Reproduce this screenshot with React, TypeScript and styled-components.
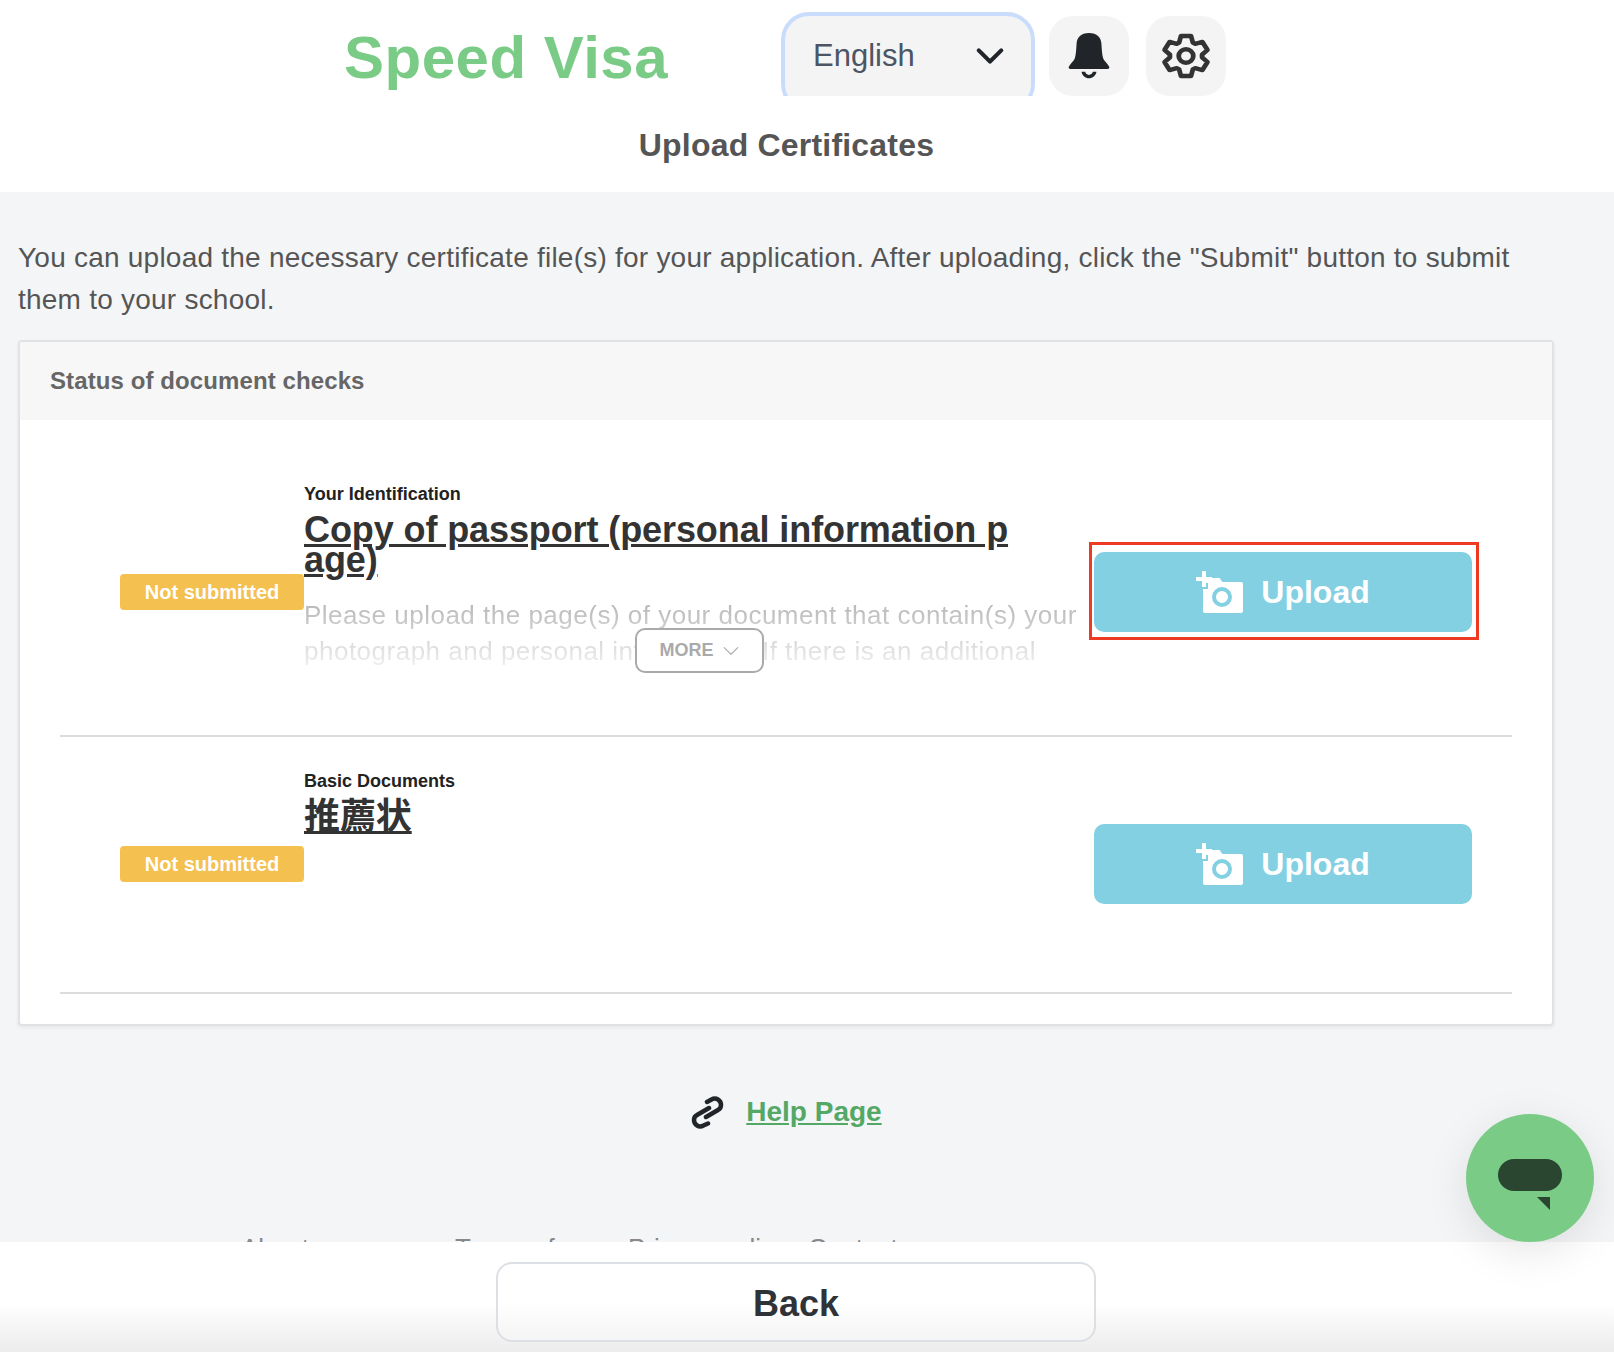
import React from "react";
import styled, { createGlobalStyle } from "styled-components";
import { BsChevronDown } from "react-icons/bs";

import type { FC } from "react";

const FONT = `"Liberation Sans", "Noto Sans CJK JP", sans-serif`;

const GlobalStyle = createGlobalStyle`
  html, body {
    margin: 0;
    padding: 0;
    height: 1352px;
    overflow: hidden;
    background: #f4f5f7;
    font-family: ${FONT};
  }
  * { box-sizing: border-box; }
`;

const Header = styled.header`
  height: 192px;
  background: #fff;
`;

const TopBar = styled.div`
  display: flex;
  height: 96px;
  padding-left: 344px;
  overflow: hidden;
`;

const Logo = styled.div`
  width: 437px;
  padding-top: 22px;
  font-size: 60px;
  line-height: 72px;
  font-weight: 700;
  letter-spacing: 0.5px;
  color: #7acb86;
`;

const LangSelect = styled.div`
  display: flex;
  align-items: center;
  justify-content: space-between;
  flex-shrink: 0;
  width: 254px;
  height: 100px;
  margin-top: 12px;
  margin-right: 14px;
  padding: 0 26px 12px 28px;
  border: 4px solid #c9dcfb;
  border-radius: 28px;
  background: #f4f4f4;
  font-size: 31px;
  color: #4b5563;
`;

const IconBox = styled.div<{ $gap?: number }>`
  display: flex;
  align-items: center;
  justify-content: center;
  width: 80px;
  height: 80px;
  margin-top: 16px;
  margin-right: ${(p) => p.$gap ?? 0}px;
  border-radius: 24px;
  background: #f4f4f4;
`;

const PageTitle = styled.h1`
  margin: 0;
  width: 1573px;
  padding-top: 31px;
  font-size: 32px;
  line-height: 36px;
  font-weight: 700;
  letter-spacing: 0.2px;
  color: #555;
  text-align: center;
`;

const Main = styled.main`
  padding: 45px 60px 0 18px;
`;

const Intro = styled.p`
  margin: 0 0 19px;
  font-size: 28px;
  line-height: 42px;
  letter-spacing: 0.23px;
  color: #555;
`;

const Card = styled.section`
  border: 2px solid #e0e2e5;
  border-radius: 4px;
  background: #fff;
  box-shadow: 0 2px 4px rgba(0, 0, 0, 0.06);
  padding-bottom: 30px;
`;

const CardHead = styled.div`
  height: 78px;
  padding-left: 30px;
  background: #f7f7f8;
  font-size: 24px;
  line-height: 78px;
  font-weight: 700;
  letter-spacing: 0.1px;
  color: #666;
`;

const Row = styled.div<{ $pad: number; $height: number }>`
  display: flex;
  align-items: center;
  min-height: ${(p) => p.$height}px;
  margin: 0 40px;
  padding: ${(p) => p.$pad}px 40px 35px 60px;
  border-bottom: 2px solid #dcdcdc;
`;

const Badge = styled.div`
  flex: 0 0 184px;
  height: 36px;
  border-radius: 4px;
  background: #f4c050;
  color: #fff;
  font-size: 20px;
  line-height: 36px;
  font-weight: 700;
  text-align: center;
`;

const Body = styled.div`
  flex: 0 0 772px;
  align-self: stretch;
`;

const Category = styled.div`
  font-size: 18px;
  line-height: 20px;
  font-weight: 700;
  color: #222;
`;

const DocTitle = styled.a`
  display: block;
  margin-top: 11px;
  width: 720px;
  font-size: 36px;
  line-height: 30px;
  font-weight: 700;
  letter-spacing: -0.1px;
  color: #333;
  text-decoration: underline;
  word-break: break-all;
`;

const DescWrap = styled.div`
  position: relative;
  margin-top: 22px;
  height: 76px;
`;

const Desc = styled.p`
  margin: 0;
  font-size: 26px;
  line-height: 36px;
  letter-spacing: 0.5px;
  color: #555;
  white-space: nowrap;
  -webkit-mask-image: linear-gradient(to bottom, rgba(0, 0, 0, 0.45), rgba(0, 0, 0, 0.08));
  mask-image: linear-gradient(to bottom, rgba(0, 0, 0, 0.45), rgba(0, 0, 0, 0.08));
`;

const MoreButton = styled.button`
  position: absolute;
  left: 331px;
  top: 31px;
  display: flex;
  align-items: center;
  justify-content: center;
  gap: 8px;
  width: 129px;
  height: 45px;
  border: 2px solid #aaa;
  border-radius: 10px;
  background: #fff;
  color: #aaa;
  font: 700 18px ${FONT};
`;

const UploadWrap = styled.div`
  position: relative;
  margin-left: auto;
`;

const UploadButton = styled.button`
  display: flex;
  align-items: center;
  justify-content: center;
  gap: 18px;
  width: 378px;
  height: 80px;
  border: 0;
  border-radius: 10px;
  background: #83d0e3;
  color: #fff;
  font: 700 32px ${FONT};
`;

const RedFrame = styled.div`
  position: absolute;
  left: -5px;
  top: -10px;
  width: 390px;
  height: 98px;
  border: 3.5px solid #ee3a22;
  pointer-events: none;
`;

const HelpRow = styled.div`
  display: flex;
  align-items: center;
  justify-content: center;
  gap: 22px;
  width: 1573px;
  margin-top: 68px;
`;

const HelpLink = styled.a`
  font-size: 28px;
  line-height: 36px;
  font-weight: 700;
  color: #53a866;
  text-decoration: underline;
`;

const FooterLinks = styled.nav`
  display: flex;
  margin: 102px 0 0 241px;
  font-size: 26px;
  line-height: 32px;
  color: #888;

  a:nth-child(1) { width: 214px; }
  a:nth-child(2) { width: 173px; }
  a:nth-child(3) { width: 180px; }
`;

const BottomBar = styled.div`
  position: fixed;
  left: 0;
  right: 0;
  bottom: 0;
  height: 110px;
  padding-top: 20px;
  background: linear-gradient(to bottom, #fff 55%, #ececec 100%);
`;

const BackButton = styled.button`
  display: block;
  width: 600px;
  height: 80px;
  margin-left: 496px;
  padding-top: 4px;
  border: 2px solid #dcdfe3;
  border-radius: 16px;
  background: linear-gradient(to bottom, #fff 50%, #f4f4f5 100%);
  color: #2f3338;
  font: 700 36px ${FONT};
`;

const ChatBubble = styled.div`
  position: fixed;
  left: 1466px;
  top: 1114px;
  width: 128px;
  height: 128px;
  border-radius: 50%;
  background: #7acb86;
  box-shadow: 0 10px 44px rgba(0, 0, 0, 0.1);
`;

const ChatPill = styled.div`
  position: absolute;
  left: 32px;
  top: 45px;
  width: 64px;
  height: 32px;
  border-radius: 16px;
  background: #2a4530;
`;

const ChatTail = styled.div`
  position: absolute;
  left: 71px;
  top: 83px;
  width: 13px;
  height: 13px;
  background: #2a4530;
  clip-path: polygon(0 0, 100% 0, 100% 100%);
`;

const BellIcon = () => (
  <svg width="42" height="46" viewBox="0 0 42 48" fill="#212529" preserveAspectRatio="none">
    <path d="M21 0C13 0 9 4.500 8.600 11c-.4 6-.6 11.500-1.800 15.500C5.800 29.500 2 32 .8 35.200c-.5 1.300.2 2.300 1.700 2.300h37c1.500 0 2.200-1 1.700-2.300C40 32 36.200 29.500 35.200 26.500 34 22.500 33.800 17 33.400 11 33 4.500 29 0 21 0z" />
    <path d="M13.500 40.500h3.600c.6 2 2 3.200 3.900 3.200s3.300-1.200 3.900-3.200h3.600c-.8 4-3.800 6.800-7.500 6.800s-6.700-2.800-7.500-6.800z" />
  </svg>
);

// six chunky teeth, walked round from the top one
const gearPoints = [-90, -30, 30, 90, 150, 210]
  .flatMap((a) =>
    [
      [a - 25, 15.5],
      [a - 13, 21.5],
      [a + 13, 21.5],
      [a + 25, 15.5],
    ].map(([deg, r]) => {
      const rad = (deg * Math.PI) / 180;
      return `${(r * Math.cos(rad)).toFixed(2)},${(r * Math.sin(rad)).toFixed(2)}`;
    })
  )
  .join(" ");

const GearIcon = () => (
  <svg width="50" height="46" viewBox="-24 -24 48 48" preserveAspectRatio="none">
    <polygon points={gearPoints} fill="none" stroke="#333" strokeWidth="4.600" strokeLinejoin="round" />
    <circle r="7" fill="none" stroke="#333" strokeWidth="4.600" />
  </svg>
);

const LinkIcon = () => (
  <svg width="33" height="33" viewBox="0 0 33 33" fill="none" stroke="#212529" strokeWidth="4.500" strokeLinecap="round">
    <path d="M16 6l4.500-2.500C25 1 30 4 30 9c0 2-1 4-3 5L15 21" />
    <path d="M17 27.500l-4.500 2C8 32 3 29 3 24c0-2 1-4 3-5l12-7" />
  </svg>
);

const CameraIcon = () => (
  <svg width="47" height="42" viewBox="0 0 47 42">
    <path
      fill="#fff"
      d="M10 7h13.500l3 4H45a2 2 0 0 1 2 2v27a2 2 0 0 1-2 2H9a2 2 0 0 1-2-2V18h5v-6H7v-1z"
    />
    <path fill="#fff" d="M6 0h4v6h6v4h-6v6H6v-6H0V6h6z" />
    <circle cx="26" cy="26" r="8" fill="#fff" stroke="#83d0e3" strokeWidth="4" />
  </svg>
);

interface IDocRow {
  category: string;
  title: string;
  pad: number;
  height: number;
  highlighted?: boolean;
  children?: React.ReactNode;
}

const DocRow: FC<IDocRow> = ({ category, title, pad, height, highlighted, children }) => (
  <Row $pad={pad} $height={height}>
    <Badge>Not submitted</Badge>
    <Body>
      <Category>{category}</Category>
      <DocTitle>{title}</DocTitle>
      {children}
    </Body>
    <UploadWrap>
      <UploadButton>
        <CameraIcon />
        Upload
      </UploadButton>
      {highlighted && <RedFrame />}
    </UploadWrap>
  </Row>
);

const App: FC = () => {
  return (
    <>
      <GlobalStyle />
      <Header>
        <TopBar>
          <Logo>Speed Visa</Logo>
          <LangSelect>
            English
            <BsChevronDown size={30} color="#212529" strokeWidth={1.2} />
          </LangSelect>
          <IconBox $gap={17}>
            <BellIcon />
          </IconBox>
          <IconBox>
            <GearIcon />
          </IconBox>
        </TopBar>
        <PageTitle>Upload Certificates</PageTitle>
      </Header>

      <Main>
        <Intro>
          You can upload the necessary certificate file(s) for your application. After uploading,
          click the "Submit" button to submit them to your school.
        </Intro>
        <Card>
          <CardHead>Status of document checks</CardHead>
          <DocRow
            category="Your Identification"
            title="Copy of passport (personal information page)"
            pad={64}
            height={317}
            highlighted
          >
            <DescWrap>
              <Desc>
                Please upload the page(s) of your document that contain(s) your
                <br />
                photograph and personal information. If there is an additional
              </Desc>
              <MoreButton>
                MORE <BsChevronDown size={18} />
              </MoreButton>
            </DescWrap>
          </DocRow>
          <DocRow category="Basic Documents" title="推薦状" pad={34} height={257} />
        </Card>
      </Main>

      <HelpRow>
        <LinkIcon />
        <HelpLink>Help Page</HelpLink>
      </HelpRow>
      <FooterLinks>
        <a>About us</a>
        <a>Terms of use</a>
        <a>Privacy policy</a>
        <a>Contact</a>
      </FooterLinks>

      <BottomBar>
        <BackButton>Back</BackButton>
      </BottomBar>
      <ChatBubble>
        <ChatPill />
        <ChatTail />
      </ChatBubble>
    </>
  );
};

export default App;
